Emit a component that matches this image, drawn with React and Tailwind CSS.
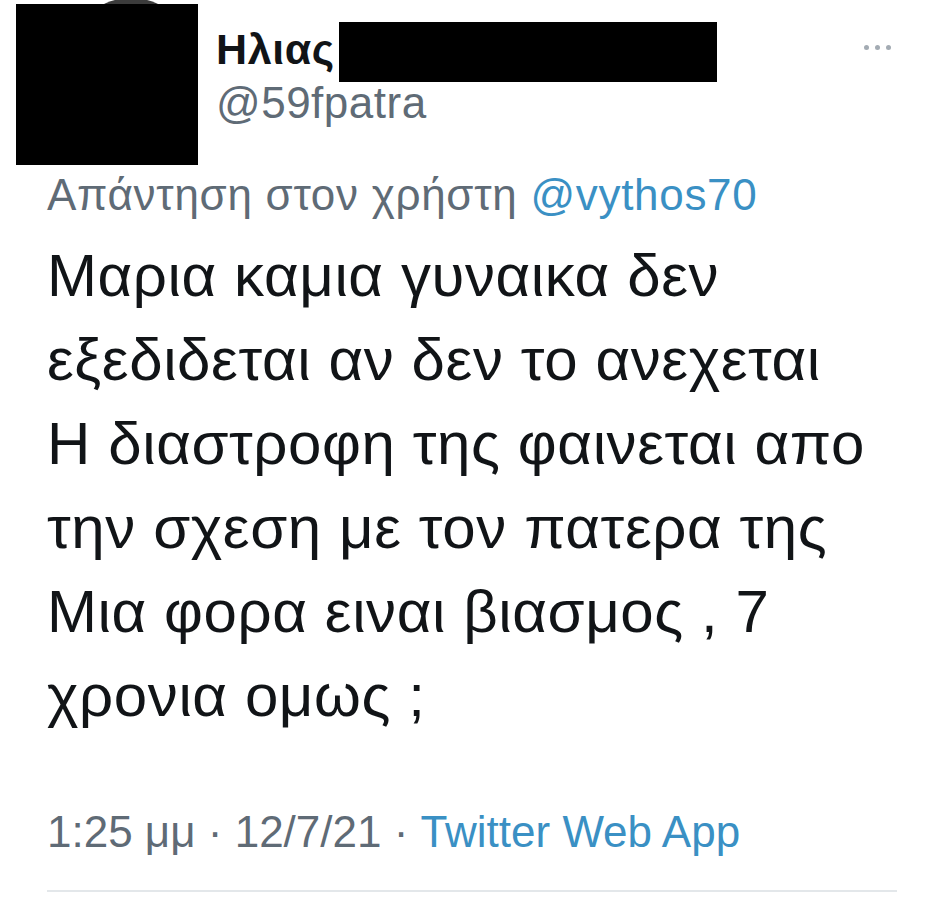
const lines = [
  'Μαρια καμια γυναικα δεν',
  'εξεδιδεται αν δεν το ανεχεται',
  'Η διαστροφη της φαινεται απο',
  'την σχεση με τον πατερα της',
  'Μια φορα ειναι βιασμος , 7',
  'χρονια ομως ;',
]

const MoreDots = () => (
  <div className="flex gap-[6px]">
    <span className="h-[5px] w-[5px] rounded-full bg-[#a3abb3]" />
    <span className="h-[5px] w-[5px] rounded-full bg-[#a3abb3]" />
    <span className="h-[5px] w-[5px] rounded-full bg-[#a3abb3]" />
  </div>
)

const App = () => {
  return (
    <div
      className="relative h-[903px] w-[945px] overflow-hidden bg-white text-[#111417]"
      style={{ fontFamily: '"Liberation Sans", Arial, sans-serif' }}
    >
      {/* header: redacted avatar + name */}
      <div className="flex">
        <div className="relative ml-[16px] mt-[4px] h-[161px] w-[182px]">
          {/* edge of the real avatar peeking out above the redaction */}
          <div className="absolute left-[50px] top-[-6px] h-[130px] w-[130px] rounded-full bg-[#3b3b3b]" />
          <div className="absolute inset-0 bg-black" />
        </div>

        <div className="ml-[18px] mt-[22px] flex flex-col">
          <div className="flex h-[60px] items-start">
            <span className="mt-[1px] text-[43px] font-bold leading-[52px] tracking-[0.6px]">Ηλιας</span>
            <div className="ml-[4px] h-[60px] w-[378px] bg-black" />
          </div>
          <span className="mt-[-1px] text-[44px] leading-[44px] tracking-[0.5px] text-[#5f6b76]">@59fpatra</span>
        </div>

        <div className="ml-auto mr-[54px] mt-[45px] self-start">
          <MoreDots />
        </div>
      </div>

      <div className="mt-[4px] pl-[47px] text-[44px] leading-[52px] tracking-[0.7px] text-[#5f6b76] whitespace-nowrap">
        Απάντηση στον χρήστη <span className="text-[#3a90c4]">@vythos70</span>
      </div>

      <div className="mt-[13px] pl-[47px] text-[60px] leading-[84px] tracking-[0.6px]">
        {lines.map((line) => (
          <div key={line} className="whitespace-nowrap">
            {line}
          </div>
        ))}
      </div>

      <div className="mt-[68px] pl-[47px] text-[44px] leading-[52px] text-[#5f6b76] whitespace-nowrap">
        1:25 μμ · 12/7/21 · <span className="text-[#3a90c4]">Twitter Web App</span>
      </div>

      <div className="ml-[47px] mr-[48px] mt-[32px] h-[2px] bg-[#e3e7ea]" />
    </div>
  )
}

export default App
